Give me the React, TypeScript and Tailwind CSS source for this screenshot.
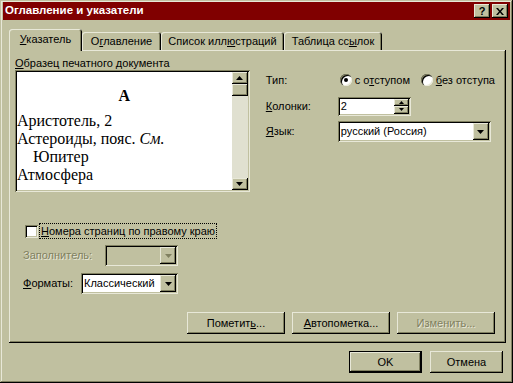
const raised =
  "shadow-[inset_-1px_-1px_#000,inset_1px_1px_#e8e8d8,inset_-2px_-2px_#808060]";
const sunken =
  "shadow-[inset_1px_1px_#808060,inset_-1px_-1px_#e8e8d8,inset_2px_2px_#000,inset_-2px_-2px_#c0c0a0]";
const disabledText = "text-[#808060] text-shadow-[1px_1px_0_#e8e8d8]";

function Arrow({ up = false, disabled = false, w = 7 }: { up?: boolean; disabled?: boolean; w?: number }) {
  const h = Math.ceil(w / 2);
  const pts = up ? `0,${h} ${w},${h} ${w / 2},0` : `0,0 ${w},0 ${w / 2},${h}`;
  return (
    <svg width={w} height={h} viewBox={`0 0 ${w} ${h}`} className="block">
      <polygon points={pts} fill={disabled ? "#808060" : "#000"} />
    </svg>
  );
}

function Combo({ value, width, disabled = false }: { value?: string; width: string; disabled?: boolean }) {
  return (
    <div className={`${width} h-[21px] p-[2px] flex ${sunken} ${disabled ? "bg-[#c0c0a0]" : "bg-white"}`}>
      <div className="flex-1 flex items-center pl-[1px] overflow-hidden whitespace-nowrap">{value}</div>
      <div className={`w-[16px] h-full bg-[#c0c0a0] flex items-center justify-center ${raised}`}>
        <Arrow disabled={disabled} />
      </div>
    </div>
  );
}

function Button({ children, width, disabled = false, isDefault = false }: { children: React.ReactNode; width: string; disabled?: boolean; isDefault?: boolean }) {
  return (
    <div className={`${width} h-[22px] ${isDefault ? "border border-black" : ""}`}>
      <div className={`w-full h-full flex items-center justify-center bg-[#c0c0a0] ${raised} ${disabled ? disabledText : ""}`}>
        {children}
      </div>
    </div>
  );
}

function Radio({ checked }: { checked?: boolean }) {
  return (
    <div className="w-[12px] h-[12px] shrink-0 rounded-full bg-white flex items-center justify-center shadow-[inset_1px_1px_#808060,inset_2px_2px_#000,inset_-1px_-1px_#e8e8d8]">
      {checked && <div className="w-[4px] h-[4px] rounded-full bg-black" />}
    </div>
  );
}

const tabs = [
  { label: <><u>У</u>казатель</>, w: "w-[73px]", active: true },
  { label: <>О<u>г</u>лавление</>, w: "w-[79px]" },
  { label: <>Список илл<u>ю</u>страций</>, w: "w-[123px]" },
  { label: <>Таблица сс<u>ы</u>лок</>, w: "w-[98px]" },
];

export default function App() {
  return (
    <div
      className="w-[513px] h-[383px] bg-[#c0c0a0] pt-[2px] px-[3px] text-[11px] text-black shadow-[inset_-1px_-1px_#000,inset_1px_1px_#c0c0a0,inset_-2px_-2px_#808060,inset_2px_2px_#e8e8d8] flex flex-col"
      style={{ fontFamily: '"Liberation Sans", Arial, sans-serif' }}
    >
      {/* title bar */}
      <div className="h-[18px] bg-[#800000] flex items-center justify-between pl-[2px] pr-[2px]">
        <span className="text-white font-bold text-[11.5px]">Оглавление и указатели</span>
        <div className="flex gap-[2px]">
          <div className={`w-[16px] h-[14px] bg-[#c0c0a0] flex items-center justify-center font-bold text-[11px] ${raised}`}>?</div>
          <div className={`w-[16px] h-[14px] bg-[#c0c0a0] flex items-center justify-center ${raised}`}>
            <svg width="8" height="7" viewBox="0 0 8 7">
              <path d="M0 0h2l2 2.5L6 0h2L5 3.5 8 7H6L4 4.5 2 7H0l3-3.5z" fill="#000" />
            </svg>
          </div>
        </div>
      </div>

      <div className="px-[6px] flex flex-col">
        {/* tabs */}
        <div className="mt-[9px] h-[21px] flex relative z-10">
          {tabs.map((t, i) => (
            <div
              key={i}
              className={`${t.w} flex items-center justify-center rounded-t-[3px] bg-[#c0c0a0] shadow-[inset_1px_1px_#e8e8d8,inset_-1px_0_#000,inset_-2px_0_#808060] ${
                t.active ? "h-[22px] self-start pb-[1px]" : "h-[18px] self-end pt-[1px]"
              }`}
            >
              <span className="whitespace-nowrap">{t.label}</span>
            </div>
          ))}
        </div>

        {/* panel */}
        <div className="w-[497px] h-[293px] pt-[6px] pl-[6px] pr-[11px] flex flex-col shadow-[inset_-1px_-1px_#000,inset_1px_1px_#e8e8d8,inset_-2px_-2px_#808060]">
          <div className="flex">
            <div className="w-[236px]">
              <div className="h-[14px] leading-[14px]">
                <u>О</u>бразец печатного документа
              </div>
              <div className={`h-[122px] bg-white p-[2px] flex ${sunken}`}>
                <div
                  className="flex-1 overflow-hidden text-[16px] leading-[18px] pt-[15px] whitespace-nowrap"
                  style={{ fontFamily: '"Liberation Serif", "Times New Roman", serif' }}
                >
                  <div className="text-center font-bold">А</div>
                  <div className="mt-[7px]">Аристотель, 2</div>
                  <div>Астероиды, пояс. <i>См.</i></div>
                  <div className="pl-[16px]">Юпитер</div>
                  <div>Атмосфера</div>
                </div>
                <div className="w-[16px] flex flex-col bg-[#e0e0d0]">
                  <div className={`h-[12px] bg-[#c0c0a0] flex items-center justify-center ${raised}`}>
                    <Arrow up />
                  </div>
                  <div className={`h-[12px] bg-[#c0c0a0] ${raised}`} />
                  <div className="flex-1" />
                  <div className={`h-[12px] bg-[#c0c0a0] flex items-center justify-center ${raised}`}>
                    <Arrow />
                  </div>
                </div>
              </div>
            </div>

            <div className="ml-[16px] pt-[15px] flex flex-col">
              <div className="h-[18px] flex items-center whitespace-nowrap">
                <span className="w-[72px]">Тип:</span>
                <div className="flex items-center w-[83px] pl-[2px]">
                  <Radio checked />
                  <span className="ml-[3px]">с о<u>т</u>ступом</span>
                </div>
                <div className="flex items-center">
                  <Radio />
                  <span className="ml-[3px]"><u>б</u>ез отступа</span>
                </div>
              </div>
              <div className="mt-[8px] h-[18px] flex items-center">
                <span className="w-[72px]"><u>К</u>олонки:</span>
                <div className={`w-[73px] h-[19px] bg-white p-[2px] flex ${sunken}`}>
                  <div className="flex-1 flex items-center pl-[1px]">2</div>
                  <div className="w-[15px] flex flex-col">
                    <div className={`flex-1 bg-[#c0c0a0] flex items-center justify-center ${raised}`}>
                      <Arrow up w={5} />
                    </div>
                    <div className={`flex-1 bg-[#c0c0a0] flex items-center justify-center ${raised}`}>
                      <Arrow w={5} />
                    </div>
                  </div>
                </div>
              </div>
              <div className="mt-[6px] h-[21px] flex items-center">
                <span className="w-[72px]"><u>Я</u>зык:</span>
                <Combo value="русский (Россия)" width="w-[153px]" />
              </div>
            </div>
          </div>

          {/* checkbox */}
          <div className="mt-[31px] ml-[10px] h-[16px] flex items-center">
            <div className={`w-[13px] h-[13px] bg-white ${sunken}`} />
            <div className="ml-[1px] h-[16px] px-[1px] flex items-center border border-dotted border-black">
              <u>Н</u>омера страниц по правому краю
            </div>
          </div>

          <div className="mt-[6px] ml-[8px] flex items-center">
            <span className={`w-[82px] ${disabledText}`}>Заполнитель:</span>
            <Combo width="w-[73px]" disabled />
          </div>

          <div className="mt-[7px] ml-[8px] flex items-center">
            <span className="w-[58px]"><u>Ф</u>орматы:</span>
            <Combo value="Классический" width="w-[97px]" />
          </div>

          <div className="mt-[18px] flex justify-end gap-[7px]">
            <Button width="w-[98px]">Пометит<u>ь</u>...</Button>
            <Button width="w-[98px]"><u>А</u>втопометка...</Button>
            <Button width="w-[98px]" disabled>Изменить...</Button>
          </div>
        </div>

        {/* dialog buttons */}
        <div className="mt-[8px] flex justify-end gap-[8px] pr-[1px]">
          <Button width="w-[73px]" isDefault>OK</Button>
          <Button width="w-[73px]">Отмена</Button>
        </div>
      </div>
    </div>
  );
}
